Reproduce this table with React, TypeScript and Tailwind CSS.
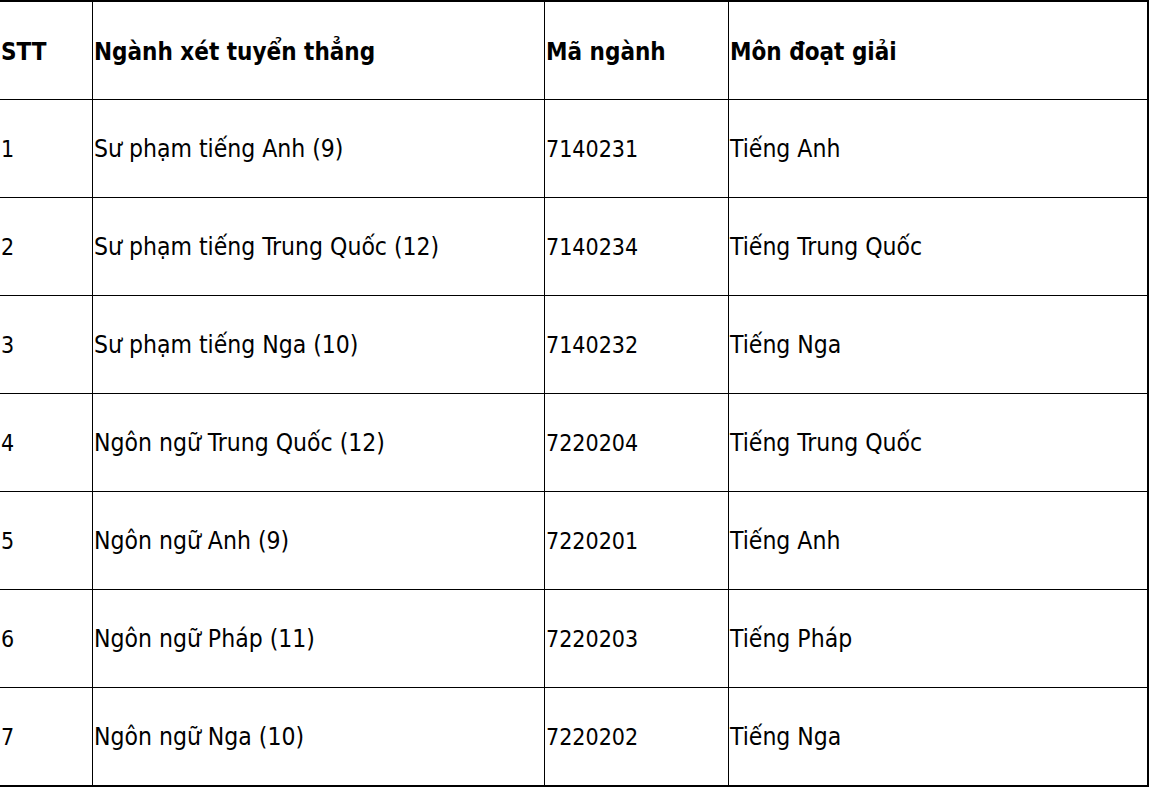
import React from 'react'

const rows = [
  ['1', 'Sư phạm tiếng Anh (9)', '7140231', 'Tiếng Anh'],
  ['2', 'Sư phạm tiếng Trung Quốc (12)', '7140234', 'Tiếng Trung Quốc'],
  ['3', 'Sư phạm tiếng Nga (10)', '7140232', 'Tiếng Nga'],
  ['4', 'Ngôn ngữ Trung Quốc (12)', '7220204', 'Tiếng Trung Quốc'],
  ['5', 'Ngôn ngữ Anh (9)', '7220201', 'Tiếng Anh'],
  ['6', 'Ngôn ngữ Pháp (11)', '7220203', 'Tiếng Pháp'],
  ['7', 'Ngôn ngữ Nga (10)', '7220202', 'Tiếng Nga'],
]

function Row({ cells, head, last }: { cells: string[]; head?: boolean; last?: boolean }) {
  return (
    <div
      className={`grid grid-cols-[93px_452px_184px_418px] ${last ? 'h-[97px]' : 'h-[98px] border-b border-black'} ${head ? 'font-bold text-[24px]' : 'text-[24.5px]'}`}
    >
      {cells.map((c, i) => (
        <div
          key={i}
          className={`flex items-center pt-[2px] pl-[1px] ${i < 3 ? 'border-r border-black' : ''} ${!head && (i === 0 || i === 2) ? 'text-[23px]' : ''}`}
        >
          {c}
        </div>
      ))}
    </div>
  )
}

export default function App() {
  return (
    <div className="w-[1149px] h-[787px] bg-white text-black font-['DejaVu_Sans_Condensed','DejaVu_Sans',sans-serif]">
      <div className="border-t-2 border-b-2 border-r-2 border-black">
        <Row cells={['STT', 'Ngành xét tuyển thẳng', 'Mã ngành', 'Môn đoạt giải']} head />
        {rows.map((r, i) => (
          <Row key={i} cells={r} last={i === rows.length - 1} />
        ))}
      </div>
    </div>
  )
}
